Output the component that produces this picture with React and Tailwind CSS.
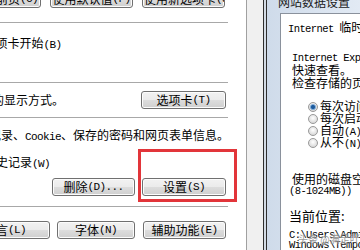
import React from "react";

const MONO = "font-['Liberation_Mono',monospace] text-[11px] tracking-[-0.6px]";
const MONO_SM = "font-['Liberation_Mono',monospace] text-[10.5px] tracking-[-0.6px]";

// splits a label into CJK and ASCII runs, ASCII gets the narrow mono face
function Mix({ t, a = MONO }) {
  const parts = t.split(/([\x20-\x7e]+)/);
  return (
    <>
      {parts.map((p, i) =>
        /^[\x20-\x7e]+$/.test(p) ? (
          <span key={i} className={a}>
            {p}
          </span>
        ) : (
          <span key={i}>{p}</span>
        )
      )}
    </>
  );
}

function WinButton({ label, className = "" }) {
  return (
    <div
      className={
        "h-[18px] shrink-0 rounded-[3px] border border-[#707070] bg-[linear-gradient(#f2f2f2_0%,#ebebeb_50%,#dddddd_50%,#cfcfcf_100%)] shadow-[inset_0_0_0_1px_#fcfcfc] flex items-center justify-center overflow-hidden whitespace-nowrap text-[12px] leading-[12px] text-black " +
        className
      }
    >
      <Mix t={label} />
    </div>
  );
}

function Radio({ on }) {
  return (
    <svg width="10" height="10" viewBox="0 0 10 10" className="shrink-0">
      <defs>
        <radialGradient id={on ? "rg1" : "rg0"} cx="50%" cy="40%" r="60%">
          <stop offset="0%" stopColor="#ffffff" />
          <stop offset="100%" stopColor="#d4d4d4" />
        </radialGradient>
      </defs>
      <circle cx="5" cy="5" r="4.5" fill={`url(#${on ? "rg1" : "rg0"})`} stroke="#9a9a9a" />
      {on && <circle cx="5" cy="5" r="2.6" fill="#1d5a9c" stroke="#86b4e0" strokeWidth="0.8" />}
    </svg>
  );
}

function Line() {
  return <div className="h-px w-[228px] bg-[#a8a8a8]" />;
}

export default function App() {
  const radios = [
    { label: "每次访问网页时(E)", on: true },
    { label: "每次启动 Internet Explorer 时(S)" },
    { label: "自动(A)" },
    { label: "从不(N)" },
  ];

  return (
    <div className="relative flex h-[250px] w-[360px] overflow-hidden bg-white font-['Noto_Sans_CJK_SC',sans-serif] text-[12px] text-black">
      {/* Internet options page */}
      <div className="flex w-[247px] shrink-0 flex-col border-r border-[#a0a0a0] bg-white">
        <div className="mt-[-10px] flex">
          <WinButton label="使用当前页(C)" className="ml-[-43px] w-[84px]" />
          <WinButton label="使用默认值(F)" className="ml-[9px] w-[83px]" />
          <WinButton label="使用新选项卡(U)" className="ml-[9px] w-[83px] justify-start pl-[1px]" />
        </div>
        <div className="mt-[14px]">
          <Line />
        </div>
        <div className="mt-[13px] ml-[-16.5px] whitespace-nowrap leading-[14px]">
          <Mix t="选项卡开始(B)" />
        </div>
        <div className="mt-[30px]">
          <Line />
        </div>
        <div className="mt-[8px] flex w-[226px] items-center justify-between">
          <div className="ml-[-20px] whitespace-nowrap leading-[14px]">
            <Mix t="中的显示方式。" />
          </div>
          <WinButton label="选项卡(T)" className="w-[85px]" />
        </div>
        <div className="mt-[8px]">
          <Line />
        </div>
        <div className="mt-[10px] ml-[-35px] whitespace-nowrap leading-[14px]">
          <Mix t="历史记录、Cookie、保存的密码和网页表单信息。" />
        </div>
        <div className="mt-[11px] ml-[-16px] whitespace-nowrap leading-[14px]">
          <Mix t="历史记录(W)" />
        </div>
        <div className="mt-[7px] flex pl-[52px]">
          <WinButton label="删除(D)..." className="w-[83px]" />
          <WinButton label="设置(S)" className="ml-[7px] w-[84px]" />
        </div>
        <div className="mt-[10px]">
          <Line />
        </div>
        <div className="mt-[14px] flex">
          <WinButton label="语言(L)" className="ml-[-40px] w-[90px]" />
          <WinButton label="字体(N)" className="ml-[7px] w-[78px]" />
          <WinButton label="辅助功能(E)" className="ml-[8px] w-[83px]" />
        </div>
      </div>

      {/* dialog background strip */}
      <div className="w-[16px] shrink-0 bg-[#f0f0f0]" />

      {/* website data settings dialog */}
      <div className="w-px shrink-0 bg-[#2e2e2e]" />
      <div className="w-[2px] shrink-0 bg-[#d3dbe5]" />
      <div className="w-px shrink-0 bg-[#2e2e2e]" />
      <div className="flex w-[93px] shrink-0 flex-col bg-[linear-gradient(90deg,#cfdbea,#e2eaf4)]">
        <div className="h-[13px] overflow-hidden pl-[11px]">
          <div className="mt-[-5px] whitespace-nowrap text-[12px] leading-[14px] text-[#1a1a1a]">网站数据设置</div>
        </div>
        <div className="ml-[13px] flex flex-1 flex-col overflow-hidden border-l border-t border-[#8a919c] bg-white text-[12px] leading-[12px]">
          <div className="mt-[7px] pl-[7px] whitespace-nowrap">
            <Mix t="Internet 临时文件" a={MONO_SM} />
          </div>
          <div className="mt-[15px] pl-[11px] whitespace-nowrap">
            <Mix t="Internet Explorer 存储网页、图像和媒体的副本以便以后" a={MONO_SM} />
          </div>
          <div className="pl-[11px] whitespace-nowrap">快速查看。</div>
          <div className="mt-[1px] pl-[11px] whitespace-nowrap">检查存储的页面的较新版本:</div>
          <div className="mt-[12px] flex flex-col">
            {radios.map((r) => (
              <div key={r.label} className="flex h-[12px] items-center gap-[2px] pl-[27px] whitespace-nowrap">
                <Radio on={r.on} />
                <span>
                  <Mix t={r.label} a={MONO_SM} />
                </span>
              </div>
            ))}
          </div>
          <div className="mt-[24px] pl-[11px] whitespace-nowrap">使用的磁盘空间</div>
          <div className={"pl-[8px] whitespace-nowrap " + MONO_SM}>(8-1024MB))</div>
          <div className="mt-[12px] pl-[8px] whitespace-nowrap text-[13px] leading-[13px]">当前位置:</div>
          <div className={"mt-[8px] pl-[8px] whitespace-nowrap leading-[10px] " + MONO_SM}>
            C:\Users\Administrator\AppData\Local\Microsoft\
          </div>
          <div className={"pl-[8px] whitespace-nowrap leading-[10px] " + MONO_SM}>
            Windows\Temporary Internet Files\
          </div>
        </div>
      </div>

      {/* red highlight round the settings button */}
      <div className="absolute left-[138px] top-[149px] h-[53px] w-[99px] border-[3px] border-[#e2353a]" />

      {/* watermark */}
      <div className="absolute left-[298px] top-[233px] whitespace-nowrap text-[10px] leading-[12px] text-[#7a7a7a]/80 [text-shadow:0_0_2px_#ffffff]">
        头条 @满足吖
      </div>
    </div>
  );
}
